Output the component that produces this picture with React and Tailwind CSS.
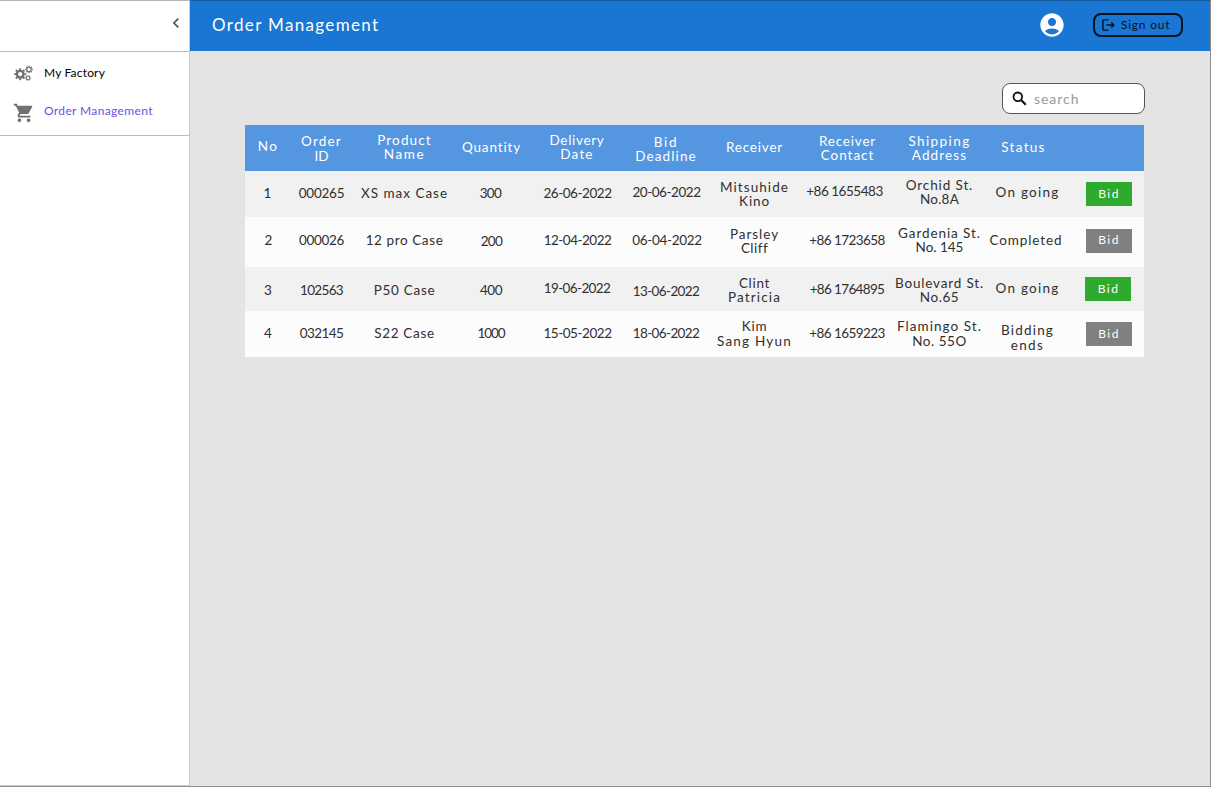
import React from "react";
import { MdShoppingCart, MdAccountCircle, MdChevronLeft } from "react-icons/md";

const columns = "grid grid-cols-[45px_62px_104px_70px_103px_75px_100px_86px_98px_78px_78px]";

const header = [
  { pad: "pb-[4px]", lines: [["No", "tracking-[1.4px]"]] },
  { pad: "pt-[1px]", lines: [["Order", "tracking-[1.17px]"], ["ID", "tracking-normal"]] },
  { pad: "pb-[2px]", lines: [["Product", "tracking-[1.12px]"], ["Name", "tracking-[1.59px]"]] },
  { pad: "pb-[2px]", lines: [["Quantity", "tracking-[0.87px]"]] },
  { pad: "pb-[2px] pr-[2px]", lines: [["Delivery", "tracking-[0.68px]"], ["Date", "tracking-[1.16px]"]] },
  { pad: "pt-[2px] pr-[2px]", lines: [["Bid", "tracking-[1.74px]"], ["Deadline", "tracking-[1.11px]"]] },
  { pad: "pb-[2px]", lines: [["Receiver", "tracking-[0.82px]"]] },
  { pad: "", lines: [["Receiver", "tracking-[0.82px]"], ["Contact", "tracking-[0.95px]"]] },
  { pad: "", lines: [["Shipping", "tracking-[1.4px]"], ["Address", "tracking-[1.1px]"]] },
  { pad: "pb-[2px] pr-[8px]", lines: [["Status", "tracking-[1.29px]"]] },
];

const rows = [
  {
    style: "h-[46px] bg-[#f1f1f1]",
    active: true,
    button: "",
    cells: [
      { pad: "pb-[2px] pr-px", lines: [["1", ""]] },
      { pad: "pb-[2px]", lines: [["000265", "tracking-[-0.23px]"]] },
      { pad: "pb-[2px]", lines: [["XS max Case", "tracking-[0.99px]"]] },
      { pad: "pb-[2px] pr-[2px]", lines: [["300", "tracking-[-0.6px]"]] },
      { pad: "pb-[2px] pr-px", lines: [["26-06-2022", "tracking-[-0.46px]"]] },
      { pad: "pb-[3px] pr-px", lines: [["20-06-2022", "tracking-[-0.46px]"]] },
      { pad: "", lines: [["Mitsuhide", "tracking-[1.06px]"], ["Kino", "tracking-[0.86px]"]] },
      { pad: "pb-[6px] pr-[6px]", lines: [["+86 1655483", "tracking-[-0.46px]"]] },
      { pad: "pb-[4px]", lines: [["Orchid St.", "tracking-[0.88px]"], ["No.8A", "tracking-[0.23px]"]] },
      { pad: "pb-[4px]", lines: [["On going", "tracking-[1.24px]"]] },
    ],
  },
  {
    style: "h-[50px] bg-[#fcfcfc]",
    active: false,
    button: "pb-[3px]",
    cells: [
      { pad: "pb-[4px] pl-px", lines: [["2", ""]] },
      { pad: "pb-[3px]", lines: [["000026", "tracking-[-0.35px]"]] },
      { pad: "pb-[4px]", lines: [["12 pro Case", "tracking-[0.6px]"]] },
      { pad: "pb-[2px]", lines: [["200", "tracking-[-0.6px]"]] },
      { pad: "pb-[4px] pr-px", lines: [["12-04-2022", "tracking-[-0.5px]"]] },
      { pad: "pb-[4px]", lines: [["06-04-2022", "tracking-[-0.32px]"]] },
      { pad: "pb-[2px]", lines: [["Parsley", "tracking-[0.97px]"], ["Cliff", "tracking-[0.46px]"]] },
      { pad: "pb-[4px] pr-px", lines: [["+86 1723658", "tracking-[-0.59px]"]] },
      { pad: "pb-[4px]", lines: [["Gardenia St.", "tracking-[0.91px]"], ["No. 145", "tracking-normal"]] },
      { pad: "pb-[4px] pr-[3px]", lines: [["Completed", "tracking-[0.91px]"]] },
    ],
  },
  {
    style: "h-[44px] bg-[#f1f1f1]",
    active: true,
    button: "pr-[1px]",
    cells: [
      { pad: "pt-[2px]", lines: [["3", ""]] },
      { pad: "pt-[2px]", lines: [["102563", "tracking-[-0.69px]"]] },
      { pad: "pt-[2px]", lines: [["P50 Case", "tracking-[0.7px]"]] },
      { pad: "pt-[2px] pr-px", lines: [["400", "tracking-[-0.5px]"]] },
      { pad: "pb-[2px] pr-[2px]", lines: [["19-06-2022", "tracking-[-0.62px]"]] },
      { pad: "pt-[4px] pr-[2px]", lines: [["13-06-2022", "tracking-[-0.62px]"]] },
      { pad: "pt-[2px]", lines: [["Clint", "tracking-[0.7px]"], ["Patricia", "tracking-[1.16px]"]] },
      { pad: "pr-px", lines: [["+86 1764895", "tracking-[-0.65px]"]] },
      { pad: "pt-[2px]", lines: [["Boulevard St.", "tracking-[0.83px]"], ["No.65", "tracking-[0.56px]"]] },
      { pad: "pb-[2px]", lines: [["On going", "tracking-[1.24px]"]] },
    ],
  },
  {
    style: "h-[46px] bg-[#fcfcfc]",
    active: false,
    button: "",
    cells: [
      { pad: "pb-[1px]", lines: [["4", ""]] },
      { pad: "pb-[1px]", lines: [["032145", "tracking-[-0.6px]"]] },
      { pad: "pb-[1px]", lines: [["S22 Case", "tracking-[0.67px]"]] },
      { pad: "pb-[1px] pr-px", lines: [["1000", "tracking-[-1.1px]"]] },
      { pad: "pb-[1px] pr-px", lines: [["15-05-2022", "tracking-[-0.46px]"]] },
      { pad: "pb-[1px] pr-[2px]", lines: [["18-06-2022", "tracking-[-0.62px]"]] },
      { pad: "pb-[1px]", lines: [["Kim", "tracking-[0.76px]"], ["Sang Hyun", "tracking-[1.21px]"]] },
      { pad: "pb-[2px] pr-px", lines: [["+86 1659223", "tracking-[-0.55px]"]] },
      { pad: "pb-[1px]", lines: [["Flamingo St.", "tracking-[1.05px]"], ["No. 55O", "tracking-[0.54px]"]] },
      { pad: "pt-[7px]", lines: [["Bidding", "tracking-[1.21px]"], ["ends", "tracking-[1.36px]"]] },
    ],
  },
];

function Cell({ pad, lines }) {
  return (
    <div className={`flex flex-col items-center justify-center whitespace-nowrap ${pad}`}>
      {lines.map(([text, tracking]) => (
        <span key={text} className={`-mr-px ${tracking}`}>{text}</span>
      ))}
    </div>
  );
}

function SignOutIcon() {
  return (
    <svg className="h-[12px] w-[13px]" viewBox="0 0 13 12" fill="none" stroke="currentColor" strokeWidth="1.4">
      <path d="M6.4 .9H1.9Q.9 .9 .9 1.9V10.1Q.9 11.1 1.9 11.1H6.4" />
      <path d="M4.4 6H12M9.3 3.5L11.8 6L9.3 8.5" />
    </svg>
  );
}

function SearchIcon() {
  return (
    <svg className="size-[15px]" viewBox="0 0 15 15" fill="none" stroke="#111111">
      <circle cx="5.8" cy="5.8" r="4.3" strokeWidth="1.8" />
      <path d="M9 9L13.8 13.8" strokeWidth="2.2" />
    </svg>
  );
}

const gears = [
  { cx: 6.2, cy: 9.2, ring: 3.3, width: 2.4, teeth: 5.1, tooth: 1.8 },
  { cx: 15, cy: 4.4, ring: 2.2, width: 1.3, teeth: 3.3, tooth: 1.2 },
  { cx: 14, cy: 13, ring: 1.8, width: 1.1, teeth: 2.6, tooth: 0.9 },
];

function GearsIcon() {
  return (
    <svg className="h-[16px] w-[19px]" viewBox="0 0 19 16" fill="none" stroke="#707070">
      {gears.map((g) => (
        <g key={g.cx}>
          <circle cx={g.cx} cy={g.cy} r={g.ring} strokeWidth={g.width} />
          <circle cx={g.cx} cy={g.cy} r={g.teeth} strokeWidth={g.tooth} pathLength="32" strokeDasharray="2 2" strokeDashoffset="1" />
        </g>
      ))}
    </svg>
  );
}

export default function App() {
  return (
    <div className="flex h-[787px] w-[1211px] overflow-hidden border-b border-[#8f8f8f] bg-[#e4e4e4] font-['Lato',sans-serif]">
      <aside className="flex w-[190px] flex-col border-t border-r border-b border-t-[#b5b5b5] border-r-[#c9c9c9] border-b-[#cccccc] bg-white">
        <div className="flex h-[51px] items-center justify-end border-b border-[#bdbdbd] pr-[3px] pb-[6px]">
          <MdChevronLeft className="size-[20px] text-[#555555]" />
        </div>
        <nav className="flex h-[84px] flex-col border-b border-[#bdbdbd] text-[12px] leading-[14px]">
          <a className="flex h-[42px] items-center gap-[11px] pl-[14px] text-black">
            <GearsIcon />
            <span className="tracking-[0.18px]">My Factory</span>
          </a>
          <a className="flex h-[36px] items-center gap-[9px] pl-[13px] text-[#6355e0]">
            <MdShoppingCart className="mt-[2px] size-[22px] text-[#707070]" />
            <span className="pb-[2px] tracking-[0.36px]">Order Management</span>
          </a>
        </nav>
      </aside>
      <div className="flex flex-1 flex-col border-r border-[#8f8f8f]">
        <header className="flex h-[51px] items-center border-t border-[#155a9e] bg-[#1976d2] pb-[2px] pl-[22px]">
          <h1 className="flex-1 pb-[1px] text-[17px] leading-[20px] tracking-[1.34px] text-white">Order Management</h1>
          <MdAccountCircle className="mr-[27px] size-[28px] text-white" />
          <button className="mr-[27px] flex h-[24px] w-[90px] items-center gap-[6px] rounded-[8px] border-2 border-[#06121f] pl-[7px] text-[#06121f]">
            <SignOutIcon />
            <span className="text-[12px] leading-[14px] tracking-[0.76px] whitespace-nowrap">Sign out</span>
          </button>
        </header>
        <main className="flex flex-col pt-[32px] pr-[65px] pl-[55px]">
          <div className="flex h-[31px] w-[143px] items-center gap-[7px] self-end rounded-[8px] border border-[#555555] bg-white pl-[9px]">
            <SearchIcon />
            <span className="text-[14px] leading-[16px] tracking-[0.96px] text-[#9a9a9a]">search</span>
          </div>
          <div className="mt-[11px] w-[899px] text-[13.5px] leading-[14.4px] text-[#303030]">
            <div className={`${columns} h-[46px] bg-[#5596e1] text-white`}>
              {header.map((cell, i) => <Cell key={i} {...cell} />)}
            </div>
            {rows.map((row, i) => (
              <div key={i} className={`${columns} ${row.style}`}>
                {row.cells.map((cell, j) => <Cell key={j} {...cell} />)}
                <div className={`flex items-center justify-center ${row.button}`}>
                  <button className={`ml-[7px] h-[24px] w-[46px] pl-px text-[12px] tracking-[1.5px] text-white ${row.active ? "bg-[#2eaa2e]" : "bg-[#808080]"}`}>
                    Bid
                  </button>
                </div>
              </div>
            ))}
          </div>
        </main>
      </div>
    </div>
  );
}
